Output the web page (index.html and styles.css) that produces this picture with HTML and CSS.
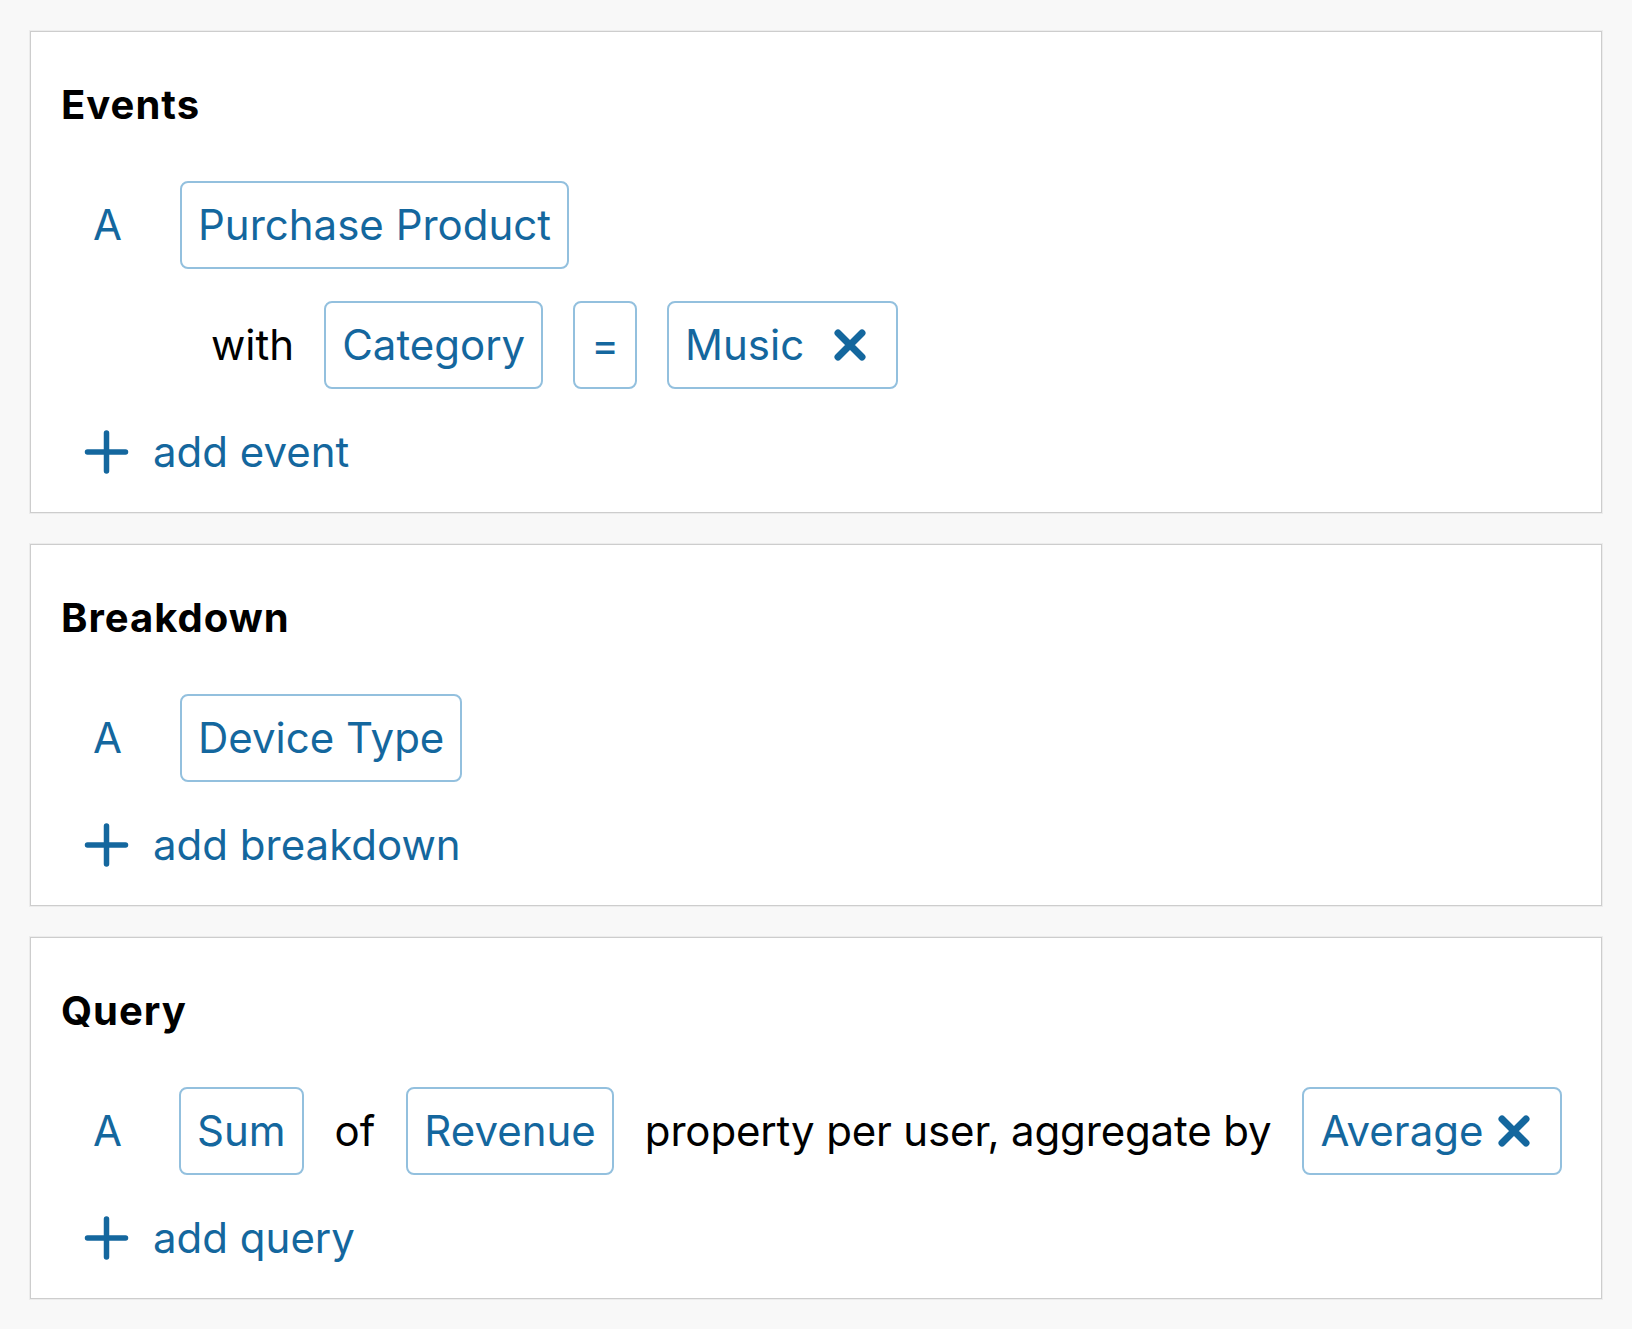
FILE: index.html
```html
<!DOCTYPE html>
<html>
<head>
<meta charset="utf-8">
<link rel="stylesheet" href="styles.css">
</head>
<body>
<div class="page">
  <section class="card">
    <h2 class="card-title">Events</h2>
    <div class="rows">
      <div class="row">
        <span class="label">A</span>
        <span class="chip">Purchase Product</span>
      </div>
      <div class="row row-sub">
        <span class="text">with</span>
        <span class="chip">Category</span>
        <span class="chip">=</span>
        <span class="chip">Music<svg class="x-icon x-wide" viewBox="0 0 32 32"><path d="M4 4 L28 28 M28 4 L4 28"/></svg></span>
      </div>
    </div>
    <div class="add"><svg class="plus-icon" viewBox="0 0 44 44"><path d="M22 3 V41 M3 22 H41"/></svg><span class="add-text">add event</span></div>
  </section>

  <section class="card">
    <h2 class="card-title">Breakdown</h2>
    <div class="rows">
      <div class="row">
        <span class="label">A</span>
        <span class="chip">Device Type</span>
      </div>
    </div>
    <div class="add"><svg class="plus-icon" viewBox="0 0 44 44"><path d="M22 3 V41 M3 22 H41"/></svg><span class="add-text">add breakdown</span></div>
  </section>

  <section class="card">
    <h2 class="card-title">Query</h2>
    <div class="rows">
      <div class="row row-query">
        <span class="label">A</span>
        <span class="chip">Sum</span>
        <span class="text">of</span>
        <span class="chip">Revenue</span>
        <span class="text text-long">property per user, aggregate by</span>
        <span class="chip">Average<svg class="x-icon x-tight" viewBox="0 0 32 32"><path d="M4 4 L28 28 M28 4 L4 28"/></svg></span>
      </div>
    </div>
    <div class="add"><svg class="plus-icon" viewBox="0 0 44 44"><path d="M22 3 V41 M3 22 H41"/></svg><span class="add-text">add query</span></div>
  </section>
</div>
</body>
</html>
```

FILE: styles.css
```css
* { box-sizing: border-box; }

html, body {
  margin: 0;
  padding: 0;
  background: #f8f8f8;
}

body {
  font-family: Inter, "Noto Sans", "Liberation Sans", sans-serif;
  color: #000;
}

.page {
  padding: 31px 30px 30px 30px;
  display: flex;
  flex-direction: column;
  gap: 31px;
}

.card {
  background: #ffffff;
  border: 1px solid #cdcdcd;
  box-shadow: 0 0 0 1px #ececec;
  padding: 51px 30px 35px 30px;
}

.card-title {
  margin: 0 0 54px 0;
  font-size: 40px;
  line-height: 44px;
  font-weight: 700;
  letter-spacing: 1px;
  color: #000;
}

.rows {
  display: flex;
  flex-direction: column;
  gap: 32px;
}

.row {
  display: flex;
  align-items: center;
  gap: 32px;
  margin-left: 32px;
  font-size: 42px;
  line-height: 50px;
  white-space: nowrap;
}

.row > * {
  flex-shrink: 0;
}

.row-sub {
  margin-left: 150px;
  gap: 30px;
}

.row-query {
  gap: 31px;
}

.label {
  color: #14679e;
  width: 55px;
}

.text {
  color: #000;
}

.text-long {
  letter-spacing: -0.15px;
}

.chip {
  display: inline-flex;
  align-items: center;
  height: 88px;
  padding: 0 16px;
  border: 2px solid #93c0de;
  border-radius: 8px;
  color: #14679e;
  white-space: nowrap;
}

.x-icon {
  width: 32px;
  height: 32px;
  fill: none;
  stroke: #14679e;
  stroke-width: 7;
  stroke-linecap: round;
  margin-right: 14px;
}

.x-wide { margin-left: 30px; }
.x-tight { margin-left: 15px; }

.add {
  display: flex;
  align-items: center;
  gap: 24px;
  margin-top: 38px;
  margin-left: 23px;
  font-size: 42px;
  line-height: 50px;
  color: #14679e;
}

.plus-icon {
  width: 45px;
  height: 44px;
  fill: none;
  stroke: #14679e;
  stroke-width: 5.5;
  stroke-linecap: round;
}
```
